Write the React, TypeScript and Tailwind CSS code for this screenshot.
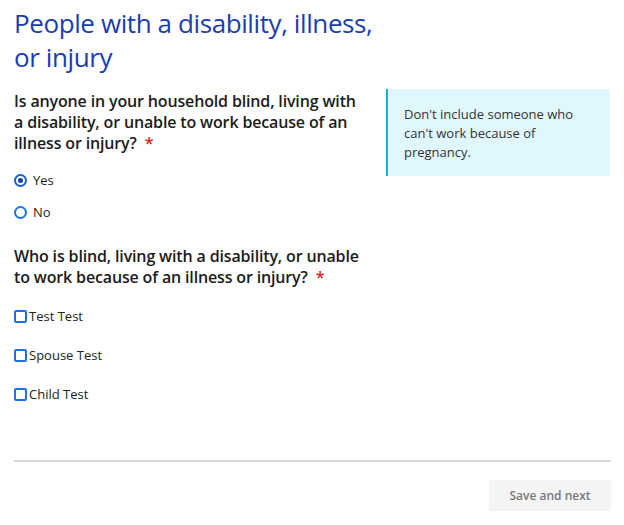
import React from "react";

export default function App() {
  return (
    <div className="w-[624px] h-[525px] bg-white overflow-hidden" style={{ fontFamily: '"Open Sans", sans-serif' }}>
      <div className="px-[14px] pt-[6px]">
        <h1 className="text-[26px] leading-[34px] tracking-[-0.4px] text-[#1a3db0] font-normal w-[372px]">
          People with a disability, illness, or injury
        </h1>
        <div className="flex mt-[17px]">
          <div className="w-[355px]">
            <p className="text-[16px] leading-[21px] tracking-[-0.15px] font-semibold text-[#1b1b1b]">
              Is anyone in your household blind, living with a disability, or unable to work because of an illness or injury?
              <span className="text-[#e0201b] ml-[8px]">*</span>
            </p>
            <div className="mt-[17px] flex flex-col gap-[14px]">
              <label className="flex items-center gap-[6px] text-[13px] leading-[18px] text-[#222]">
                <span className="w-[13px] h-[13px] rounded-full border-2 border-[#1a5ed6] flex items-center justify-center">
                  <span className="w-[5px] h-[5px] rounded-full bg-[#1a3db0]" />
                </span>
                Yes
              </label>
              <label className="flex items-center gap-[6px] text-[13px] leading-[18px] text-[#222]">
                <span className="w-[13px] h-[13px] rounded-full border-2 border-[#1a73e8]" />
                No
              </label>
            </div>
            <p className="mt-[25px] text-[16px] leading-[21px] tracking-[-0.15px] font-semibold text-[#1b1b1b]">
              Who is blind, living with a disability, or unable to work because of an illness or injury?
              <span className="text-[#e0201b] ml-[8px]">*</span>
            </p>
            <div className="mt-[19px] flex flex-col gap-[21px]">
              {["Test Test", "Spouse Test", "Child Test"].map((n) => (
                <label key={n} className="flex items-center gap-[2px] text-[13px] leading-[18px] text-[#222]">
                  <span className="w-[13px] h-[13px] rounded-[2px] border-2 border-[#1a73e8]" />
                  {n}
                </label>
              ))}
            </div>
          </div>
          <div className="ml-[19px] w-[225px] h-[87px] mt-[-2px] bg-[#e1f7fe] border-l-2 border-[#19b0e0] pl-[16px] pr-[34px] pt-[16px] text-[13px] leading-[19px] text-[#333]">
            Don't include someone who can't work because of pregnancy.
          </div>
        </div>
        <div className="mt-[57px] h-[2px] bg-[#d6d6d6] w-[597px]" />
        <div className="flex justify-end w-[597px] mt-[18px]">
          <button className="w-[122px] h-[31px] bg-[#f4f4f4] text-[#7a7a7a] text-[12px] font-semibold">
            Save and next
          </button>
        </div>
      </div>
    </div>
  );
}
